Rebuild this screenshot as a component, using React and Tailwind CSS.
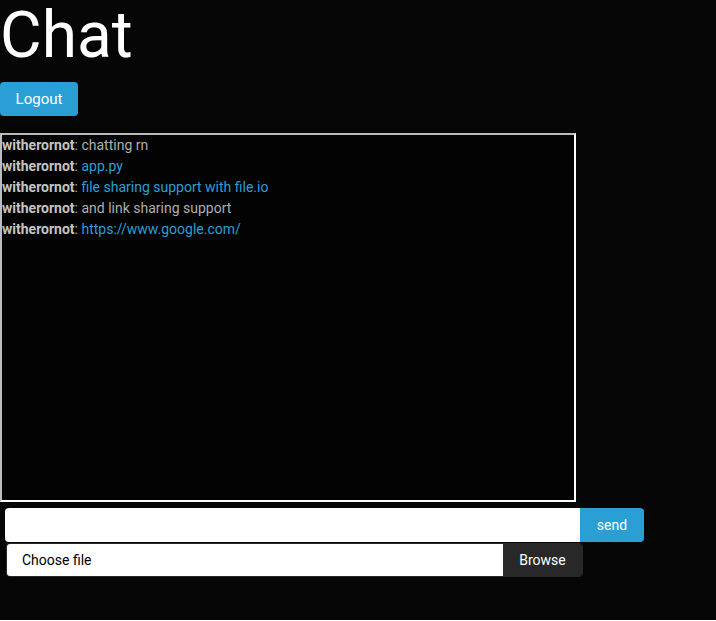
const messages = [
  { user: 'witherornot', text: 'chatting rn' },
  { user: 'witherornot', text: 'app.py', link: true },
  { user: 'witherornot', text: 'file sharing support with file.io', link: true },
  { user: 'witherornot', text: 'and link sharing support' },
  { user: 'witherornot', text: 'https://www.google.com/', link: true },
]

export default function App() {
  return (
    <div className="min-h-screen bg-[#060606] text-[#adafae] font-['Roboto',sans-serif]">
      <h1 className="text-[64px] leading-[74px] -mt-[1px] font-normal text-white">Chat</h1>

      <button className="mt-[9px] h-[34px] w-[78px] rounded-[4px] bg-[#2a9fd6] text-white text-[15px]">
        Logout
      </button>

      {/* Message log */}
      <div className="mt-[17px] w-[576px] h-[369px] border-2 border-t-[#bcbcbc] border-l-[#bcbcbc] border-r-white border-b-white bg-[#030303] text-[14px] leading-[21px]">
        {messages.map((m, i) => (
          <div key={i}>
            <b className="font-bold text-[#c4c4c4]">{m.user}</b>:{' '}
            {m.link ? <a className="text-[#2a9fd6]">{m.text}</a> : <span>{m.text}</span>}
          </div>
        ))}
      </div>

      {/* Compose */}
      <div className="mt-[6px] ml-[5px] flex">
        <input className="w-[575px] h-[34px] bg-white rounded-l-[4px] outline-none px-3 text-black" />
        <button className="w-[64px] h-[34px] bg-[#2a9fd6] rounded-r-[4px] text-white text-[14px]">send</button>
      </div>
      <div className="ml-[6px] mt-[1px] w-[577px] h-[34px] flex rounded-[4px] overflow-hidden border border-[#282828]">
        <div className="flex-1 bg-white text-black text-[14px] flex items-center pl-[15px]">Choose file</div>
        <div className="w-[79px] bg-[#282828] text-white text-[14px] flex items-center justify-center">Browse</div>
      </div>
    </div>
  )
}
